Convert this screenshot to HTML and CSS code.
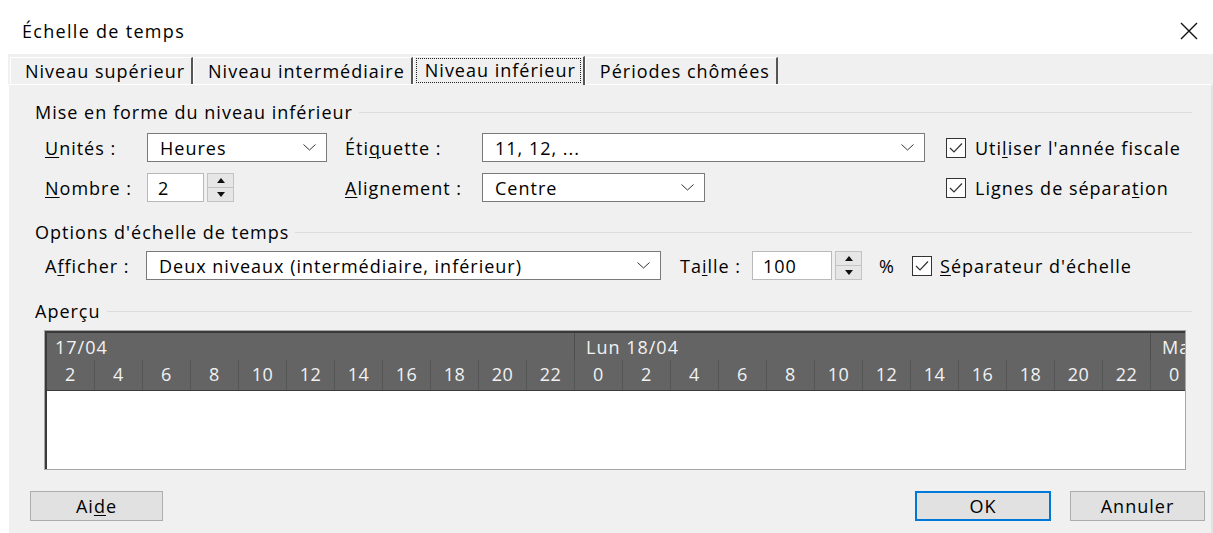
FILE: index.html
```html
<!DOCTYPE html>
<html lang="fr">
<head>
<meta charset="utf-8">
<title>Échelle de temps</title>
<link rel="stylesheet" href="styles.css">
</head>
<body>
<div class="dialog">
  <header class="titlebar">
    <span class="title">Échelle de temps</span>
    <span class="close" aria-label="Fermer">
      <svg width="18" height="18" viewBox="0 0 18 18"><path d="M1 1 L17 17 M17 1 L1 17" stroke="#111" stroke-width="1.4" fill="none"/></svg>
    </span>
  </header>

  <div class="body">
    <nav class="tabs">
      <div class="tab">Niveau supérieur</div>
      <div class="tab">Niveau intermédiaire</div>
      <div class="tab active"><span class="focus">Niveau inférieur</span></div>
      <div class="tab">Périodes chômées</div>
    </nav>

    <section class="panel">
      <div class="group-title">Mise en forme du niveau inférieur</div>
      <div class="fmt">
        <label class="lbl"><u>U</u>nités :</label>
        <div class="select w180"><span>Heures</span><svg class="chev" width="13" height="7" viewBox="0 0 13 7"><path d="M0.5 0.5 L6.5 6 L12.5 0.5" stroke="#333" fill="none"/></svg></div>
        <label class="lbl">Éti<u>q</u>uette :</label>
        <div class="select w443"><span>11, 12, ...</span><svg class="chev" width="13" height="7" viewBox="0 0 13 7"><path d="M0.5 0.5 L6.5 6 L12.5 0.5" stroke="#333" fill="none"/></svg></div>
        <label class="check"><svg class="box" width="20" height="20" viewBox="0 0 20 20"><rect x="0.5" y="0.5" width="19" height="19" fill="#fff" stroke="#333"/><path d="M4 10 L8 14 L16 5.5" stroke="#333" stroke-width="1.2" fill="none"/></svg><span>Uti<u>l</u>iser l'année fiscale</span></label>

        <label class="lbl"><u>N</u>ombre :</label>
        <div class="spin">
          <div class="field w57">2</div>
          <div class="arrows"><span class="up"></span><span class="down"></span></div>
        </div>
        <label class="lbl"><u>A</u>lignement :</label>
        <div class="select w223"><span>Centre</span><svg class="chev" width="13" height="7" viewBox="0 0 13 7"><path d="M0.5 0.5 L6.5 6 L12.5 0.5" stroke="#333" fill="none"/></svg></div>
        <label class="check"><svg class="box" width="20" height="20" viewBox="0 0 20 20"><rect x="0.5" y="0.5" width="19" height="19" fill="#fff" stroke="#333"/><path d="M4 10 L8 14 L16 5.5" stroke="#333" stroke-width="1.2" fill="none"/></svg><span>Lignes de sépara<u>t</u>ion</span></label>
      </div>

      <div class="group-title g2">Options d'échelle de temps</div>
      <div class="opts">
        <label class="lbl l101">A<u>f</u>ficher :</label>
        <div class="select w515"><span>Deux niveaux (intermédiaire, inférieur)</span><svg class="chev" width="13" height="7" viewBox="0 0 13 7"><path d="M0.5 0.5 L6.5 6 L12.5 0.5" stroke="#333" fill="none"/></svg></div>
        <label class="lbl l72 taille">Ta<u>i</u>lle :</label>
        <div class="spin">
          <div class="field w80">100</div>
          <div class="arrows"><span class="up"></span><span class="down"></span></div>
        </div>
        <span class="pct">%</span>
        <label class="check sep"><svg class="box" width="20" height="20" viewBox="0 0 20 20"><rect x="0.5" y="0.5" width="19" height="19" fill="#fff" stroke="#333"/><path d="M4 10 L8 14 L16 5.5" stroke="#333" stroke-width="1.2" fill="none"/></svg><span><u>S</u>éparateur d'échelle</span></label>
      </div>

      <div class="group-title g3">Aperçu</div>
      <div class="preview">
        <div class="preview-inner">
          <div class="scale">
            <div class="days">
              <div class="day first">17/04</div>
              <div class="day">Lun 18/04</div>
              <div class="day last">Mar 19/04</div>
            </div>
            <div class="hours">
              <span>2</span><span>4</span><span>6</span><span>8</span><span>10</span><span>12</span><span>14</span><span>16</span><span>18</span><span>20</span><span class="eod">22</span>
              <span>0</span><span>2</span><span>4</span><span>6</span><span>8</span><span>10</span><span>12</span><span>14</span><span>16</span><span>18</span><span>20</span><span class="eod">22</span>
              <span>0</span><span>2</span>
            </div>
          </div>
        </div>
      </div>

      <div class="footer">
        <button class="btn help">Ai<u>d</u>e</button>
        <div class="actions">
          <button class="btn ok">OK</button>
          <button class="btn">Annuler</button>
        </div>
      </div>
    </section>
  </div>
</div>
</body>
</html>
```

FILE: styles.css
```css
* { box-sizing: border-box; }

html, body {
  margin: 0;
  padding: 0;
}

body {
  width: 1213px;
  height: 533px;
  overflow: hidden;
  background: #fff;
  font-family: "Open Sans", "Noto Sans", sans-serif;
  font-size: 18px;
  letter-spacing: 1px;
  color: #000;
}

u { text-decoration-thickness: 1px; text-underline-offset: 2px; }

.dialog {
  display: flex;
  flex-direction: column;
  height: 533px;
}

/* window caption */
.titlebar {
  height: 54px;
  flex: none;
  display: flex;
  align-items: center;
  justify-content: space-between;
  padding: 8px 15px 0 22px;
}

.title { font-size: 18px; letter-spacing: 1.3px; }

.close { display: flex; }

/* grey client area */
.body {
  flex: 1;
  margin-left: 8px;
  background: #f0f0f0;
  display: flex;
  flex-direction: column;
}

/* tab strip */
.tabs {
  height: 30px;
  flex: none;
  display: flex;
  align-items: flex-end;
  padding-left: 2px;
}

.tab {
  height: 27px;
  padding: 0 6px 0 14px;
  display: flex;
  align-items: center;
  border-top: 1px solid #fff;
  border-left: 1px solid #fff;
  border-right: 2px solid #555;
  white-space: nowrap;
}

.tab.active {
  height: 29px;
  padding: 0 2px 2px 2px;
  margin: 0 0 -1px 0;
  position: relative;
  background: #f0f0f0;
  border-right: 2px solid #555;
}

.tab.active .focus {
  border: 1px dotted #222;
  padding: 0 4px 0 8px;
  height: 25px;
  display: flex;
  align-items: center;
}

/* tab page */
.panel {
  flex: 1;
  border-top: 1px solid #fff;
  border-left: 1px solid #fff;
  border-right: 2px solid #e4e4e4;
  padding: 16px 0 0 26px;
  display: flex;
  flex-direction: column;
}

.group-title {
  display: flex;
  align-items: center;
  gap: 6px;
  height: 22px;
  width: 1157px;
}

.group-title::after {
  content: "";
  flex: 1;
  height: 1px;
  background: #dcdcdc;
}

.g2 { margin-top: 19px; }
.g3 { margin-top: 20px; }

.fmt {
  margin: 10px 0 0 10px;
  display: grid;
  grid-template-columns: 102px 198px 137px 464px auto;
  grid-auto-rows: 29px;
  row-gap: 11px;
  align-items: center;
}

.opts {
  margin: 8px 0 0 10px;
  height: 29px;
  display: flex;
  align-items: center;
}

.lbl { white-space: nowrap; }
.l101 { width: 101px; flex: none; }
.l72 { width: 72px; flex: none; }
.taille { margin-left: 19px; }

.select {
  height: 29px;
  border: 1px solid #7a7a7a;
  background: #fff;
  display: flex;
  align-items: center;
  justify-content: space-between;
  padding: 0 10px 0 12px;
  white-space: nowrap;
}

.w180 { width: 180px; }
.w443 { width: 443px; }
.w223 { width: 223px; }
.w515 { width: 515px; flex: none; }

.spin {
  display: flex;
  gap: 3px;
  height: 29px;
}

.field {
  height: 29px;
  border: 1px solid #b9b9b9;
  background: #fff;
  padding: 0 10px;
  display: flex;
  align-items: center;
}

.w57 { width: 57px; }
.w80 { width: 80px; }

.arrows {
  width: 27px;
  display: flex;
  flex-direction: column;
  border: 1px solid #c3c3c3;
  background: #e6e6e6;
}

.arrows span {
  flex: 1;
  display: flex;
  align-items: center;
  justify-content: center;
}

.arrows .up { border-bottom: 1px solid #c3c3c3; }

.arrows .up::before,
.arrows .down::before {
  content: "";
  border-left: 4px solid transparent;
  border-right: 4px solid transparent;
}

.arrows .up::before { border-bottom: 5px solid #111; }
.arrows .down::before { border-top: 5px solid #111; }

.pct { margin-left: 17px; width: 15px; }

.check {
  display: flex;
  align-items: center;
  gap: 9px;
  white-space: nowrap;
}

.check.sep { margin-left: 18px; gap: 8px; }

.box { flex: none; }

/* timescale preview */
.preview {
  margin: 8px 0 0 9px;
  width: 1142px;
  height: 140px;
  border: 1px solid #a6a6a6;
  background: #fff;
}

.preview-inner {
  height: 100%;
  border-top: 2px solid #3a3a3a;
  border-left: 2px solid #3a3a3a;
  overflow: hidden;
}

.scale {
  background: #646464;
  color: #f2f2f2;
  border-bottom: 1px solid #3c3c3c;
}

.days {
  height: 27px;
  display: flex;
  white-space: nowrap;
}

.day {
  flex: none;
  width: 576px;
  padding: 2px 0 0 11px;
  border-right: 1px solid #4c4c4c;
}

.day.first { width: 528px; padding-left: 8px; }
.day.last { border-right: 0; }

.hours {
  height: 30px;
  display: flex;
  letter-spacing: 0.5px;
}

.hours span {
  flex: none;
  width: 48px;
  text-align: center;
  padding-top: 2px;
  border-right: 1px solid #555;
}

/* dialog buttons */
.footer {
  margin: 21px 0 0 -5px;
  width: 1175px;
  display: flex;
  justify-content: space-between;
}

.actions { display: flex; gap: 19px; }

.btn {
  height: 30px;
  width: 135px;
  border: 1px solid #adadad;
  background: #e1e1e1;
  font: inherit;
  letter-spacing: 1px;
  color: #000;
  padding: 0;
}

.btn.help { width: 133px; }

.btn.ok {
  width: 136px;
  border: 2px solid #0078d7;
}
```
